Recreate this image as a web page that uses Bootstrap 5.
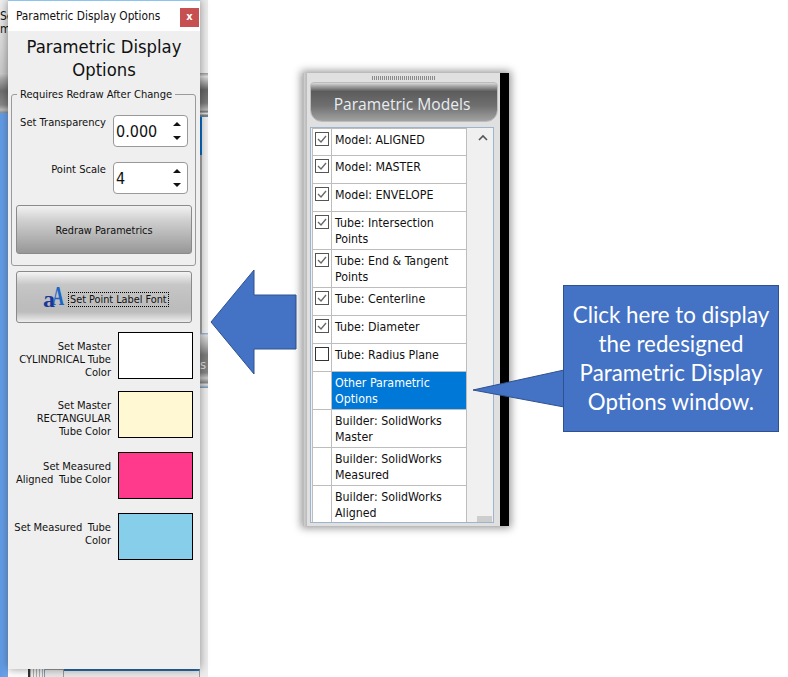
<!DOCTYPE html>
<html lang="en">
<head>
<meta charset="utf-8">
<title>Parametric Display Options</title>
<link href="https://cdn.jsdelivr.net/npm/bootstrap@5.3.0/dist/css/bootstrap.min.css" rel="stylesheet">
<style>
html,body{margin:0;background:#fff}
.stage{position:relative;width:788px;height:677px;overflow:hidden;background:#fff;font-family:"DejaVu Sans Condensed","DejaVu Sans",sans-serif;font-size:11.1px;color:#111;line-height:13px}
/* backdrop slices of the main application */
.back-left{position:absolute;left:0;top:0;width:8px;height:677px;overflow:hidden;display:flex;flex-direction:column;background:linear-gradient(90deg,#5f9be6,#6fa4ea)}
.back-top{height:73px;background:linear-gradient(180deg,#f0f0f0,#c9c9c9);padding-top:10px;white-space:nowrap;line-height:13px;font-size:12px}
.back-bar{height:40px;background:linear-gradient(180deg,#cfcfcf 0,#a8a8a8 15%,#6f6f6f 45%,#888 80%,#bdbdbd 92%,#8d8d8d 100%)}
.back-right{position:absolute;left:200px;top:0;width:8px;height:677px;overflow:hidden;display:flex;flex-direction:column;background:#efefef}
.br-a{height:73px;background:#ececec}
.br-b{height:44px;background:linear-gradient(180deg,#999 0,#ddd 8%,#bbb 16%,#666 38%,#7a7a7a 68%,#b8b8b8 84%,#777 88%,#ddd 92%,#777 97%,#4d8fd0 100%)}
.br-c{height:216px;border-left:2px solid #a9a9a9;background:#efefef}
.br-c::before{content:"";display:block;width:2px;height:38px;margin-left:-2px;background:#0a6ec8}
.br-d{height:55px;background:linear-gradient(180deg,#7fa6cf 0,#ddd 4%,#b5b5b5 20%,#7c7c7c 40%,#858585 72%,#c8c8c8 82%,#888 90%,#ddd 94%,#6f90b5 100%);color:#ddd;font-size:13px;line-height:1;padding-top:25px;overflow:hidden}
.br-e{flex:1;background:#ededed}
.back-bottom{position:absolute;left:28px;top:669px;width:172px;height:8px;display:flex;background:#e8e8e8}
.bb-dark{width:2px;background:#333}
.bb-lines{width:14px;background:repeating-linear-gradient(90deg,#aaa 0 1px,#eee 1px 3px)}
.bb-cell{width:20px;border-top:1px solid #999;border-right:1px solid #999;border-left:1px solid #7b9ab8}
.bb-rest{flex:1;border-top:2px solid #2a6ca8;border-right:1px solid #999}
/* dialog */
.dlg{position:absolute;left:8px;top:0;width:192px;height:669px;background:#efefef;border-top:1px solid #8cc4f0;box-shadow:0 0 9px rgba(0,0,0,.42)}
.dlg-title{height:30px;background:#fff;padding:7px 1px 0 8px}
.dlg-name{font-size:11.8px;padding-top:2px;color:#111}
.dlg-x{width:19px;height:19px;background:#c75050;color:#fff;font-weight:700;font-size:11px;line-height:18px;text-align:center}
.dlg-h{font-size:18.3px;line-height:23px;text-align:center;margin:4px 8px 0 8px;color:#111;font-weight:400}
.grp{position:relative;margin:13px 4px 0 3px;height:172px;border:1px solid #9a9a9a;border-radius:3px;padding:20px 4px 0}
.grp-l{position:absolute;left:5px;top:-7px;background:#efefef;padding:0 3px;white-space:nowrap}
.spinrow{display:flex;align-items:flex-start;gap:7px}
.spin2{margin-top:15px}
.lbl{text-align:right;width:90px;padding-top:1px;white-space:nowrap}
.spin{width:75px;height:32px;background:#fff;border:1px solid #999;border-radius:4px;padding:0 6px 0 2px;font-size:16px;color:#111}
.spin-arrows{display:flex;flex-direction:column;gap:10px}
.up{width:0;height:0;border:4px solid transparent;border-top:0;border-bottom:4px solid #111}
.dn{width:0;height:0;border:4px solid transparent;border-bottom:0;border-top:4px solid #111}
.wbtn{display:flex;align-items:center;justify-content:center;width:176px;padding:0;border:1px solid #8a8a8a;border-radius:3px;color:#111;font-size:10.8px;line-height:13px}
.wbtn:hover,.wbtn:active{color:#111;border-color:#8a8a8a}
.wbtn-a{height:49px;margin:11px 0 0 0;padding-top:2px;background:linear-gradient(180deg,#f2f2f2 0,#d0d0d0 30%,#b8b8b8 60%,#979797 100%)}
.wbtn-b{height:52px;margin:5px 0 0 8px;justify-content:flex-start;padding-left:26px;background:linear-gradient(180deg,#f4f4f4 0,#c6c6c6 26%,#bcbcbc 70%,#bdbdbd 80%,#ededed 100%)}
.dots{border:1px dotted #000;padding:0 1px;margin:4px 0 0 1px;height:15px;line-height:13px;white-space:nowrap}
.swrow{display:flex;align-items:flex-start;justify-content:flex-end;gap:7px;padding-right:7px}
.swl{text-align:right;line-height:13px;padding-top:8px;white-space:nowrap;word-spacing:-.4px}
.sw{width:75px;height:47px;border:1px solid #000;flex:none}
.r1{margin-top:9px}
.r2{margin-top:12px}
.r3{margin-top:14px}
.sw1{background:#fff}.sw2{background:#fff8d2}.sw3{background:#ff3a8c}.sw4{background:#87ceeb}
/* list window */
.lw{position:absolute;left:303px;top:73px;width:206px;height:453px;background:#dcdcdc;box-shadow:0 0 8px 2px rgba(0,0,0,.42);display:flex}
.lw-main{width:197px;flex:none;border-left:1px solid #bbb;padding:0 2px 0 4px;background:linear-gradient(90deg,#aaa 0,#eee 1px,#999 2px,#e0e0e0 3px);position:relative}
.lw-black{flex:1;background:#000}
.grip{width:64px;height:4px;margin:3px 0 0 64px;background:repeating-linear-gradient(90deg,#8a8a8a 0 1px,#e0e0e0 1px 2px)}
.lw-head{margin:2px 0 0 2px;width:188px;height:40px;border-radius:4px 4px 12px 12px;border:1px solid #bcbcbc;background:linear-gradient(180deg,#d9d9d9 0,#a7a7a7 8%,#5c5c5c 22%,#6f6f6f 60%,#a2a2a2 100%);color:#e8edf2;font-family:"Open Sans",sans-serif;font-size:15.6px;line-height:42px;text-align:center;padding-right:4px}
.lbx{margin:5px 0 0 2px;width:184px;height:396px;border:1px solid #9db5cc;background:#f0f0f0;padding-left:1px;position:relative;overflow:hidden}
.lrow{display:flex;width:155px;background:#fff;border:1px solid #bdbdbd;border-top:0;font-family:"DejaVu Sans Condensed","DejaVu Sans",sans-serif;font-size:12.3px;line-height:16px;color:#111}
.lrow:first-child{border-top:1px solid #bdbdbd}
.chk{width:19px;flex:none;border-right:1px solid #bdbdbd;padding:3px 0 0 2px}
.chk svg{display:block}
.ltx{padding:3px 3px 0 3px;flex:1;white-space:nowrap}
.h28{height:28px}.h38{height:38px}
.sel .ltx{background:#0078d7;color:#fff}
.sb-up{position:absolute;left:167px;top:6px}
.sb-thumb{position:absolute;left:166px;top:388px;width:15px;height:8px;background:#cdcdcd}
/* callout and arrow */
.shape{position:absolute;display:block}
.arrow-left{left:210px;top:269px}
.tail{left:472px;top:368px}
.callout{position:absolute;left:563px;top:285px;width:216px;height:147px;background:#4472c4;border:1px solid #2f528f;color:#fff;font-family:"Lato",sans-serif;font-size:22.3px;line-height:29px;text-align:center;padding-top:14px;white-space:nowrap}
</style>
</head>
<body>
<div class="stage">

  <div class="back-left">
    <div class="back-top">Se<br>m</div>
    <div class="back-bar"></div>
  </div>
  <div class="back-right">
    <div class="br-a"></div>
    <div class="br-b"></div>
    <div class="br-c"></div>
    <div class="br-d">s</div>
    <div class="br-e"></div>
  </div>
  <div class="back-bottom">
    <div class="bb-dark"></div><div class="bb-lines"></div><div class="bb-cell"></div><div class="bb-rest"></div>
  </div>

  <div class="dlg">
    <div class="dlg-title d-flex justify-content-between">
      <div class="dlg-name">Parametric Display Options</div>
      <div class="dlg-x">x</div>
    </div>
    <h1 class="dlg-h">Parametric Display Options</h1>
    <div class="grp">
      <div class="grp-l">Requires Redraw After Change</div>
      <div class="spinrow">
        <div class="lbl">Set Transparency</div>
        <div class="spin d-flex align-items-center justify-content-between"><span>0.000</span><span class="spin-arrows"><span class="up"></span><span class="dn"></span></span></div>
      </div>
      <div class="spinrow spin2">
        <div class="lbl">Point Scale</div>
        <div class="spin d-flex align-items-center justify-content-between"><span>4</span><span class="spin-arrows"><span class="up"></span><span class="dn"></span></span></div>
      </div>
      <button type="button" class="btn wbtn wbtn-a">Redraw Parametrics</button>
    </div>
    <button type="button" class="btn wbtn wbtn-b">
      <svg width="24" height="24" viewBox="0 0 24 24" aria-hidden="true"><text transform="translate(9 20) scale(.62 1)" font-family="Liberation Serif" font-weight="700" font-size="27" fill="#1a66c8">A</text><text x="0" y="22" font-family="Liberation Serif" font-weight="700" font-size="24" fill="#17379a">a</text></svg>
      <span class="dots">Set Point Label Font</span>
    </button>
    <div class="swrow r1"><div class="swl">Set Master<br>CYLINDRICAL Tube<br>Color</div><div class="sw sw1"></div></div>
    <div class="swrow r2"><div class="swl">Set Master<br>RECTANGULAR<br>Tube Color</div><div class="sw sw2"></div></div>
    <div class="swrow r3"><div class="swl">Set Measured<br>Aligned&nbsp; Tube Color</div><div class="sw sw3"></div></div>
    <div class="swrow r3"><div class="swl">Set Measured&nbsp; Tube<br>Color</div><div class="sw sw4"></div></div>
  </div>

  <svg class="shape arrow-left" width="88" height="106" viewBox="0 0 88 106"><polygon points="1,53 44,1 44,26 86,26 86,80 44,80 44,105" fill="#4472c4" stroke="#2f528f"/></svg>

  <div class="lw">
    <div class="lw-main">
      <div class="grip"></div>
      <div class="lw-head">Parametric Models</div>
      <div class="lbx">
        <div class="lrow h28"><div class="chk"><svg width="14" height="14" viewBox="0 0 14 14"><rect x=".5" y=".5" width="13" height="13" fill="#fff" stroke="#555"/><path d="M3 7l3 3 5-6" fill="none" stroke="#666" stroke-width="1.3"/></svg></div><div class="ltx">Model: ALIGNED</div></div>
        <div class="lrow h28"><div class="chk"><svg width="14" height="14" viewBox="0 0 14 14"><rect x=".5" y=".5" width="13" height="13" fill="#fff" stroke="#555"/><path d="M3 7l3 3 5-6" fill="none" stroke="#666" stroke-width="1.3"/></svg></div><div class="ltx">Model: MASTER</div></div>
        <div class="lrow h28"><div class="chk"><svg width="14" height="14" viewBox="0 0 14 14"><rect x=".5" y=".5" width="13" height="13" fill="#fff" stroke="#555"/><path d="M3 7l3 3 5-6" fill="none" stroke="#666" stroke-width="1.3"/></svg></div><div class="ltx">Model: ENVELOPE</div></div>
        <div class="lrow h38"><div class="chk"><svg width="14" height="14" viewBox="0 0 14 14"><rect x=".5" y=".5" width="13" height="13" fill="#fff" stroke="#555"/><path d="M3 7l3 3 5-6" fill="none" stroke="#666" stroke-width="1.3"/></svg></div><div class="ltx">Tube: Intersection<br>Points</div></div>
        <div class="lrow h38"><div class="chk"><svg width="14" height="14" viewBox="0 0 14 14"><rect x=".5" y=".5" width="13" height="13" fill="#fff" stroke="#555"/><path d="M3 7l3 3 5-6" fill="none" stroke="#666" stroke-width="1.3"/></svg></div><div class="ltx">Tube: End &amp; Tangent<br>Points</div></div>
        <div class="lrow h28"><div class="chk"><svg width="14" height="14" viewBox="0 0 14 14"><rect x=".5" y=".5" width="13" height="13" fill="#fff" stroke="#555"/><path d="M3 7l3 3 5-6" fill="none" stroke="#666" stroke-width="1.3"/></svg></div><div class="ltx">Tube: Centerline</div></div>
        <div class="lrow h28"><div class="chk"><svg width="14" height="14" viewBox="0 0 14 14"><rect x=".5" y=".5" width="13" height="13" fill="#fff" stroke="#555"/><path d="M3 7l3 3 5-6" fill="none" stroke="#666" stroke-width="1.3"/></svg></div><div class="ltx">Tube: Diameter</div></div>
        <div class="lrow h28"><div class="chk"><svg width="14" height="14" viewBox="0 0 14 14"><rect x=".5" y=".5" width="13" height="13" fill="#fff" stroke="#333"/></svg></div><div class="ltx">Tube: Radius Plane</div></div>
        <div class="lrow h38 sel"><div class="chk"></div><div class="ltx">Other Parametric<br>Options</div></div>
        <div class="lrow h38"><div class="chk"></div><div class="ltx">Builder: SolidWorks<br>Master</div></div>
        <div class="lrow h38"><div class="chk"></div><div class="ltx">Builder: SolidWorks<br>Measured</div></div>
        <div class="lrow h38"><div class="chk"></div><div class="ltx">Builder: SolidWorks<br>Aligned</div></div>
        <svg class="sb-up" width="10" height="7" viewBox="0 0 10 7"><path d="M1 6l4-4 4 4" fill="none" stroke="#555" stroke-width="1.6"/></svg>
        <div class="sb-thumb"></div>
      </div>
    </div>
    <div class="lw-black"></div>
  </div>

  <svg class="shape tail" width="93" height="41" viewBox="0 0 93 41"><polygon points="1,22 92,2 92,39" fill="#4472c4" stroke="#2f528f"/></svg>
  <div class="callout">Click here to display<br>the redesigned<br>Parametric Display<br>Options window.</div>

</div>
<script src="https://cdn.jsdelivr.net/npm/bootstrap@5.3.0/dist/js/bootstrap.bundle.min.js"></script>
</body>
</html>
